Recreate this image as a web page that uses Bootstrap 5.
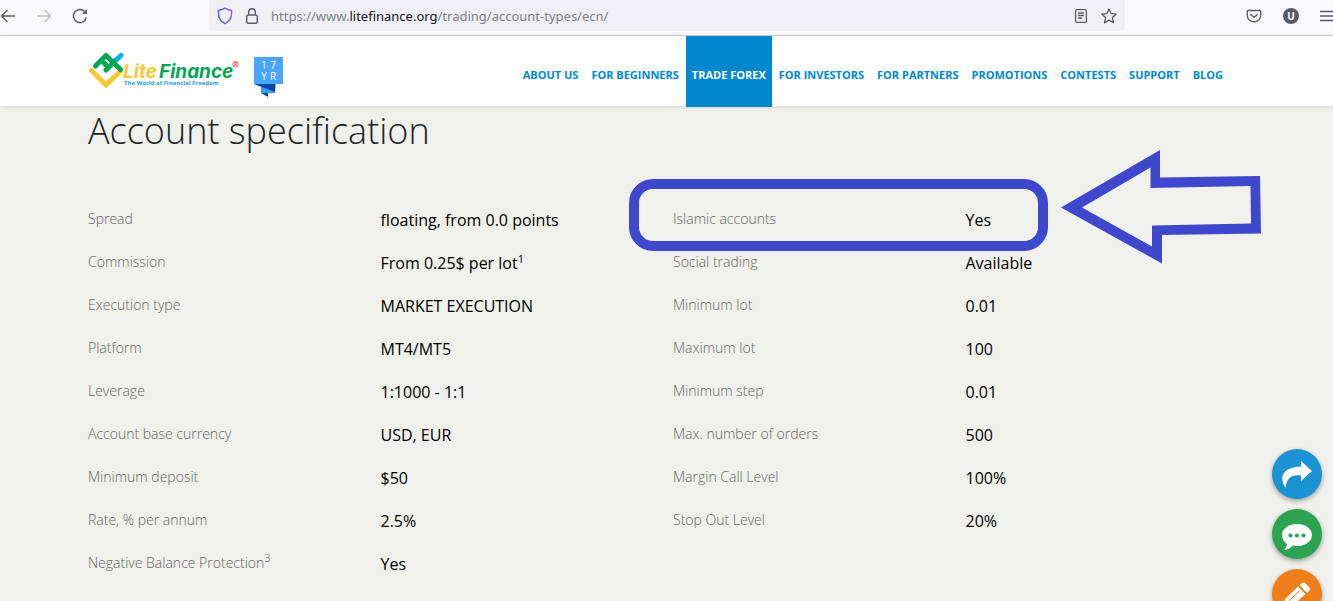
<!DOCTYPE html>
<html lang="en">
<head>
<meta charset="utf-8">
<meta name="viewport" content="width=device-width, initial-scale=1">
<title>ECN account types | LiteFinance</title>
<link href="https://cdn.jsdelivr.net/npm/bootstrap@5.3.0/dist/css/bootstrap.min.css" rel="stylesheet">
<style>
  body { font-family: "Open Sans", "Noto Sans", sans-serif; background: #f0f0ec; color: #000; }
  svg { display: block; flex: none; }
  button.bare { background: none; border: 0; padding: 0; color: #5b5b66; }
  button.bare:disabled { color: #bcbcc2; }

  /* browser toolbar */
  .browser-bar { height: 36px; background: #f9f9fb; border-bottom: 1px solid #ccccce; padding-bottom: 4px; }
  .bar-side { width: 209px; gap: 20px; }
  .bar-end { width: 208px; gap: 21px; }
  .address { background: #f0f0f4; border-radius: 0 0 4px 4px; height: 31px; padding: 0 8px; gap: 12px; color: #5b5b66; }
  .address-text { font-family: "Noto Sans", sans-serif; font-size: 13px; line-height: 20px; color: #808086; text-decoration: none; }
  .address-text b { color: #15141a; font-weight: 400; }
  button.avatar { width: 16px; height: 16px; border-radius: 50%; background: #5b5b66; color: #fff; font-size: 10px; line-height: 16px; font-weight: 700; }

  /* site header */
  .site-header { background: #fff; height: 70px; box-shadow: 0 1px 4px rgba(0,0,0,.12); padding: 0 104px 0 88px; position: relative; }
  .site-nav { gap: 1px; }
  .site-nav .nav-link { font-size: 11px; font-weight: 700; line-height: 16px; color: #0088cf; padding: 6px 6px 0; height: 71px; display: flex; align-items: center; white-space: nowrap; text-transform: uppercase; }
  .site-nav .nav-link.active { background: #0088cf; color: #fff; }

  /* specification */
  .spec-area { padding: 5px 75px 0 88px; }
  .spec-area h1 { font-size: 36px; line-height: 40px; font-weight: 300; color: #212529; margin: 0 0 47px; }
  .spec-table { width: 100%; table-layout: fixed; }
  .spec-table th, .spec-table td { height: 43px; padding: 0; vertical-align: middle; line-height: 22px; text-align: left; }
  .spec-table th { font-size: 14px; font-weight: 300; color: #666; width: 50%; padding-bottom: 2px; }
  .spec-table td { font-size: 16px; }
  .spec-table sup { font-size: 11px; line-height: 0; }

  /* highlight drawn over the Islamic accounts row */
  .marker-box { position: absolute; left: -44px; top: -19px; width: 419px; height: 72px; border: 10px solid #3f48cc; border-radius: 24px; pointer-events: none; }
  .marker-arrow { position: absolute; left: 388px; top: -50px; pointer-events: none; }

  .float-tools { position: fixed; right: 11px; top: 449px; gap: 10px; }
  .float-tools button { width: 50px; height: 50px; border: 0; border-radius: 50%; padding: 0; box-shadow: 0 2px 5px rgba(0,0,0,.35); }
  .tool-share { background: #1b92d1; }
  .tool-chat { background: #2ca351; }
  .tool-edit { background: #ef7f1a; }
</style>
</head>
<body>
<div class="browser-bar d-flex align-items-center">
  <div class="bar-side d-flex align-items-center flex-shrink-0">
    <button class="bare" aria-label="Back"><svg width="16" height="16" viewBox="0 0 16 16" fill="none" stroke="currentColor" stroke-width="1.4"><path d="M15 8H1.500M7.500 2L1.500 8l6 6"/></svg></button>
    <button class="bare" aria-label="Forward" disabled><svg width="16" height="16" viewBox="0 0 16 16" fill="none" stroke="currentColor" stroke-width="1.400"><path d="M1 8h13.500M8.500 2l6 6-6 6"/></svg></button>
    <button class="bare" aria-label="Reload"><svg width="16" height="16" viewBox="0 0 16 16" fill="none" stroke="currentColor" stroke-width="1.500"><path d="M14.300 9.500A6.500 6.500 0 1 1 12.500 3.400"/><path d="M15 1v5h-5z" fill="currentColor" stroke="none"/></svg></button>
  </div>
  <div class="address d-flex align-items-center flex-grow-1">
    <svg width="16" height="18" viewBox="0 0 16 18" fill="none" stroke-width="1.500"><defs><linearGradient id="sh" x1="0" y1="1" x2="1" y2="0"><stop stop-color="#2f62d8"/><stop offset="1" stop-color="#9a63f2"/></linearGradient></defs><path d="M8 1.200C6.300 2.300 4 3 1.500 3.400 1 9 2.500 14.200 8 16.600 13.500 14.200 15 9 14.500 3.400 12 3 9.700 2.300 8 1.200z" stroke="url(#sh)"/></svg>
    <svg width="14" height="18" viewBox="1 0 14 18" fill="none" stroke="currentColor" stroke-width="1.400"><rect x="2.700" y="8" width="10.600" height="8.300" rx="1.500"/><path d="M4.700 8V5a3.300 3.300 0 0 1 6.600 0v3"/></svg>
    <a class="address-text flex-grow-1" href="#">https://www.<b>litefinance.org</b>/trading/account-types/ecn/</a>
    <button class="bare" aria-label="Reader view"><svg width="16" height="16" viewBox="0 0 16 16" fill="none" stroke="currentColor" stroke-width="1.300"><rect x="2.600" y="1.600" width="10.800" height="12.800" rx="1.500"/><path d="M5 5h6M5 7.500h6M5 10h4"/></svg></button>
    <button class="bare" aria-label="Bookmark"><svg width="16" height="16" viewBox="0 0 16 16" fill="none" stroke="currentColor" stroke-width="1.300" stroke-linejoin="round"><path d="M8 1l2.100 4.600 5 .6-3.700 3.400 1 5L8 12.100 3.600 14.600l1-5L.9 6.200l5-.6z"/></svg></button>
  </div>
  <div class="bar-end d-flex align-items-center justify-content-end flex-shrink-0">
    <button class="bare" aria-label="Save to Pocket"><svg width="16" height="16" viewBox="0 0 16 16" fill="none" stroke="currentColor" stroke-width="1.400" stroke-linecap="round"><path d="M2.300 2.500h11.400c.6 0 1 .4 1 1V7.500a6.700 6.300 0 0 1-13.400 0V3.500c0-.6.4-1 1-1z"/><path d="M4.700 6.400L8 9.400l3.300-3"/></svg></button>
    <button class="bare avatar text-center" aria-label="Account">U</button>
    <button class="bare" aria-label="Menu"><svg width="13" height="14" viewBox="0 0 13 14" stroke="currentColor" stroke-width="1.300"><path d="M0 2.500h13M0 7h13M0 11.500h13"/></svg></button>
  </div>
</div>

<header class="site-header d-flex align-items-start justify-content-between">
  <a href="#" class="d-flex" aria-label="LiteFinance home">
    <svg width="200" height="70" viewBox="88 36 200 70" font-family="Open Sans, sans-serif">
      <g fill="none" stroke-width="5" stroke-linejoin="round" stroke-linecap="round">
        <path d="M91.500 70.500L106 85l14-13.500" stroke="#f8c832"/>
        <path d="M115 61l6-5.500" stroke="#00aeef"/>
        <path d="M95.500 66L106 55.500l14.500 14M106 70l8-8M104 63l4 4" stroke="#00a651"/>
      </g>
      <g font-family="Inter, sans-serif" font-weight="700" font-style="italic" font-size="19">
        <text x="123" y="78" fill="#f8c832">Lite</text>
        <text x="159" y="78" fill="#00a651">Finance</text>
      </g>
      <circle cx="235.600" cy="64.200" r="2.800" fill="none" stroke="#e0503c" stroke-width=".8"/>
      <text x="234" y="66" font-size="5" font-weight="700" fill="#e0503c">R</text>
      <text x="124" y="85" font-size="6" font-weight="700" fill="#1ba0dc">The World of Financial Freedom</text>
      <path d="M261 84h15l-1 9h-14z" fill="#3d9bf5"/>
      <path d="M254 84h21v8z" fill="#0048a8"/><path d="M261 93h7v4z" fill="#0048a8"/>
      <path d="M254 57h29v27h-29z" fill="#4aa5ff"/>
      <g font-size="10" fill="#fff" text-anchor="middle"><text x="264" y="69">1</text><text x="273" y="69">7</text><text x="264" y="80">Y</text><text x="273" y="80">R</text></g>
    </svg>
  </a>
  <nav class="site-nav nav flex-nowrap">
    <a class="nav-link" href="#">About us</a>
    <a class="nav-link" href="#">For beginners</a>
    <a class="nav-link active" href="#">Trade Forex</a>
    <a class="nav-link" href="#">For investors</a>
    <a class="nav-link" href="#">For partners</a>
    <a class="nav-link" href="#">Promotions</a>
    <a class="nav-link" href="#">Contests</a>
    <a class="nav-link" href="#">Support</a>
    <a class="nav-link" href="#">Blog</a>
  </nav>
</header>

<main class="spec-area">
  <h1>Account specification</h1>
  <div class="row g-0">
    <div class="col-6">
      <table class="spec-table">
        <tr><th scope="row">Spread</th><td>floating, from 0.0 points</td></tr>
        <tr><th scope="row">Commission</th><td>From 0.25$ per lot<sup>1</sup></td></tr>
        <tr><th scope="row">Execution type</th><td>MARKET EXECUTION</td></tr>
        <tr><th scope="row">Platform</th><td>MT4/MT5</td></tr>
        <tr><th scope="row">Leverage</th><td>1:1000 - 1:1</td></tr>
        <tr><th scope="row">Account base currency</th><td>USD, EUR</td></tr>
        <tr><th scope="row">Minimum deposit</th><td>$50</td></tr>
        <tr><th scope="row">Rate, % per annum</th><td>2.5%</td></tr>
        <tr><th scope="row">Negative Balance Protection<sup>3</sup></th><td>Yes</td></tr>
      </table>
    </div>
    <div class="col-6 position-relative">
      <table class="spec-table">
        <tr><th scope="row">Islamic accounts</th><td>Yes</td></tr>
        <tr><th scope="row">Social trading</th><td>Available</td></tr>
        <tr><th scope="row">Minimum lot</th><td>0.01</td></tr>
        <tr><th scope="row">Maximum lot</th><td>100</td></tr>
        <tr><th scope="row">Minimum step</th><td>0.01</td></tr>
        <tr><th scope="row">Max. number of orders</th><td>500</td></tr>
        <tr><th scope="row">Margin Call Level</th><td>100%</td></tr>
        <tr><th scope="row">Stop Out Level</th><td>20%</td></tr>
      </table>
      <div class="marker-box"></div>
      <svg class="marker-arrow" width="204" height="120" viewBox="0 0 204 120"><path fill="#3f48cc" fill-rule="evenodd" d="M0 59.500L99 2V29.500L199 28l1 57.500L101 87v28.500zM21 59.500L91 98.500V77.500L190 75.500 189.500 38 89.500 40V19.500z"/></svg>
    </div>
  </div>
</main>

<div class="float-tools d-flex flex-column">
  <button class="tool-share" aria-label="Share"><svg width="50" height="50" viewBox="0 0 50 50" fill="#fff"><path d="M29 12l11 10-11 10v-5.500c-8-.8-14 .5-15.500 12.500C6 27 12 18 29 17.500z"/></svg></button>
  <button class="tool-chat" aria-label="Chat"><svg width="50" height="50" viewBox="0 0 50 50"><path fill="#fff" d="M25 15c8.500 0 15 4.700 15 11s-6.500 11-15 11c-1.500 0-3 0-4.200-.4C19 39 15.500 40.600 12 41c1.500-1.500 2.800-3.500 3-6C12 33 10 29.800 10 26c0-6.300 6.500-11 15-11z"/><g fill="#2ca351"><circle cx="18.500" cy="26.500" r="2.100"/><circle cx="25" cy="26.500" r="2.100"/><circle cx="31.500" cy="26.500" r="2.100"/></g></svg></button>
  <button class="tool-edit" aria-label="Edit"><svg width="50" height="50" viewBox="0 0 50 50"><path fill="#fff" d="M11 39l2-9 13-12.500 7.500 7.500L20 37zM27.500 16l2.500-2q2-1 3.500.500l4 4q1 1.500 0 3L35 24z"/><path d="M17 32l10.500-10.500" stroke="#ef7f1a"/></svg></button>
</div>
<script src="https://cdn.jsdelivr.net/npm/bootstrap@5.3.0/dist/js/bootstrap.bundle.min.js"></script>
</body>
</html>
